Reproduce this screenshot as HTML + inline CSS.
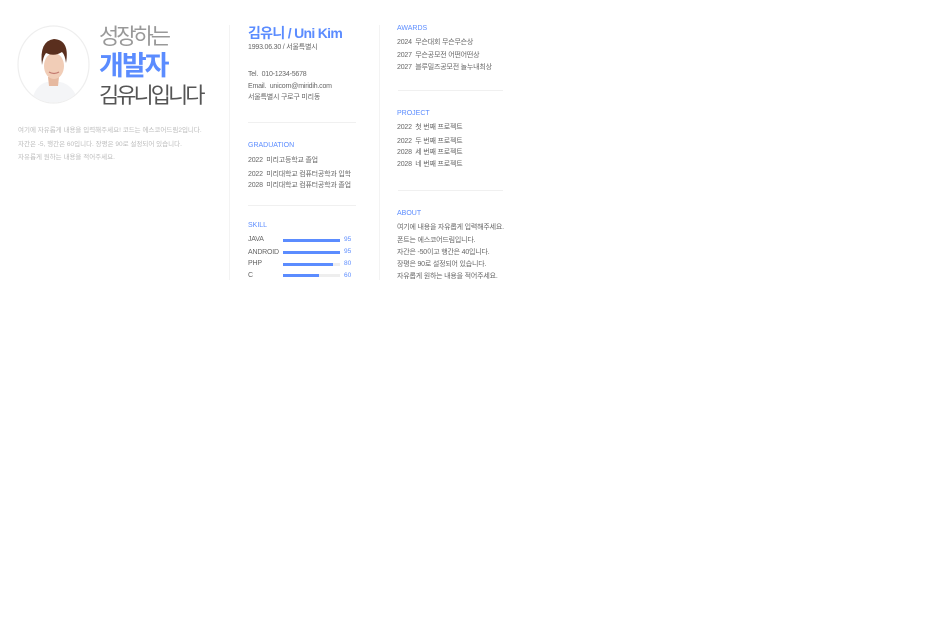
<!DOCTYPE html>
<html><head><meta charset="utf-8"><style>
*{margin:0;padding:0;box-sizing:border-box}
body{width:928px;height:624px;background:#fff;position:relative;overflow:hidden;font-family:"Liberation Sans","Noto Sans CJK KR",sans-serif;color:#555}
.a{position:absolute;white-space:nowrap}
.s{font-size:7px;line-height:8px;color:#666;letter-spacing:-0.2px}
.h{font-size:7px;line-height:8px;color:#5b8cff}
.p{font-size:6.5px;line-height:8px;color:#bbb}
.hr{position:absolute;height:1px;background:#f0f0f0}
.bar{position:absolute;height:3px;background:#eee;width:57px;left:283px}
.bar i{display:block;height:3px;background:#5b8cff}
.n{font-size:6.5px;line-height:8px;color:#5b8cff;left:344px}
</style></head><body>
<svg class="a" style="left:17px;top:25px" width="73" height="79" viewBox="0 0 73 79">
<defs><clipPath id="c"><ellipse cx="36.5" cy="39.5" rx="35" ry="38"/></clipPath></defs>
<ellipse cx="36.5" cy="39.5" rx="35.5" ry="38.5" fill="#fff" stroke="#eee" stroke-width="1.2"/>
<g clip-path="url(#c)">
<path d="M14 80 Q17 60 30 57 L43 57 Q58 60 62 80Z" fill="#f4f5f7"/>
<path d="M31 52 L42 52 L41 61 L32 61Z" fill="#e6b9a0"/>
<ellipse cx="37" cy="41" rx="10" ry="13" fill="#f1cdb7"/>
<path d="M25 40 Q22 16 37 14 Q53 15 49 38 Q48 30 45 27 Q37 32 29 28 Q26 32 25 40Z" fill="#5a2f1e"/>
<path d="M32 47 Q37 50 42 47" stroke="#c47b70" stroke-width="1.2" fill="none"/>
</g></svg>
<div class="a" style="left:99px;top:25px;font-size:22px;line-height:24px;color:#999;letter-spacing:-3px">성장하는</div>
<div class="a" style="left:99px;top:52px;font-size:27px;line-height:28px;color:#5b8cff;font-weight:bold;letter-spacing:-2px">개발자</div>
<div class="a" style="left:99px;top:84px;font-size:22px;line-height:24px;color:#555;letter-spacing:-3px">김유니입니다</div>
<div class="a p" style="left:18px;top:127px">여기에 자유롭게 내용을 입력해주세요! 코드는 에스코어드림2입니다.</div>
<div class="a p" style="left:18px;top:141px">자간은 -5, 행간은 60입니다. 장평은 90로 설정되어 있습니다.</div>
<div class="a p" style="left:18px;top:154px">자유롭게 원하는 내용을 적어주세요.</div>
<div class="a" style="left:229px;top:25px;width:1px;height:255px;background:#f3f3f3"></div>
<div class="a" style="left:379px;top:25px;width:1px;height:255px;background:#f3f3f3"></div>
<div class="a" style="left:248px;top:25px;font-size:14px;line-height:16px;color:#5b8cff;font-weight:bold;letter-spacing:-0.7px">김유니 / Uni Kim</div>
<div class="a s" style="left:248px;top:44px">1993.06.30 / 서울특별시</div>
<div class="a s" style="left:248px;top:71px">Tel.&nbsp; 010-1234-5678</div>
<div class="a s" style="left:248px;top:83px">Email.&nbsp; unicorn@miridih.com</div>
<div class="a s" style="left:248px;top:94px">서울특별시 구로구 미리동</div>
<div class="hr" style="left:248px;top:122px;width:108px"></div>
<div class="a h" style="left:248px;top:142px">GRADUATION</div>
<div class="a s" style="left:248px;top:157px">2022&nbsp; 미리고등학교 졸업</div>
<div class="a s" style="left:248px;top:171px">2022&nbsp; 미리대학교 컴퓨터공학과 입학</div>
<div class="a s" style="left:248px;top:182px">2028&nbsp; 미리대학교 컴퓨터공학과 졸업</div>
<div class="hr" style="left:248px;top:205px;width:108px"></div>
<div class="a h" style="left:248px;top:222px">SKILL</div>
<div class="a s" style="left:248px;top:236px">JAVA</div>
<div class="a s" style="left:248px;top:249px">ANDROID</div>
<div class="a s" style="left:248px;top:260px">PHP</div>
<div class="a s" style="left:248px;top:272px">C</div>
<div class="bar" style="top:239px"><i style="width:57px"></i></div>
<div class="bar" style="top:251px"><i style="width:57px"></i></div>
<div class="bar" style="top:263px"><i style="width:50px"></i></div>
<div class="bar" style="top:274px"><i style="width:36px"></i></div>
<div class="a n" style="top:236px">95</div>
<div class="a n" style="top:248px">95</div>
<div class="a n" style="top:260px">80</div>
<div class="a n" style="top:272px">60</div>
<div class="a h" style="left:397px;top:25px">AWARDS</div>
<div class="a s" style="left:397px;top:39px">2024&nbsp; 무슨대회 무슨무슨상</div>
<div class="a s" style="left:397px;top:52px">2027&nbsp; 무슨공모전 어떤어떤상</div>
<div class="a s" style="left:397px;top:64px">2027&nbsp; 블루밀즈공모전 놀누내최상</div>
<div class="hr" style="left:398px;top:90px;width:105px"></div>
<div class="a h" style="left:397px;top:110px">PROJECT</div>
<div class="a s" style="left:397px;top:124px">2022&nbsp; 첫 번째 프로젝트</div>
<div class="a s" style="left:397px;top:138px">2022&nbsp; 두 번째 프로젝트</div>
<div class="a s" style="left:397px;top:149px">2028&nbsp; 세 번째 프로젝트</div>
<div class="a s" style="left:397px;top:161px">2028&nbsp; 네 번째 프로젝트</div>
<div class="hr" style="left:398px;top:190px;width:105px"></div>
<div class="a h" style="left:397px;top:210px">ABOUT</div>
<div class="a s" style="left:397px;top:224px">여기에 내용을 자유롭게 입력해주세요.</div>
<div class="a s" style="left:397px;top:237px">폰트는 에스코어드림입니다.</div>
<div class="a s" style="left:397px;top:249px">자간은 -50이고 행간은 40입니다.</div>
<div class="a s" style="left:397px;top:261px">장평은 90로 설정되어 있습니다.</div>
<div class="a s" style="left:397px;top:273px">자유롭게 원하는 내용을 적어주세요.</div>
</body></html>
